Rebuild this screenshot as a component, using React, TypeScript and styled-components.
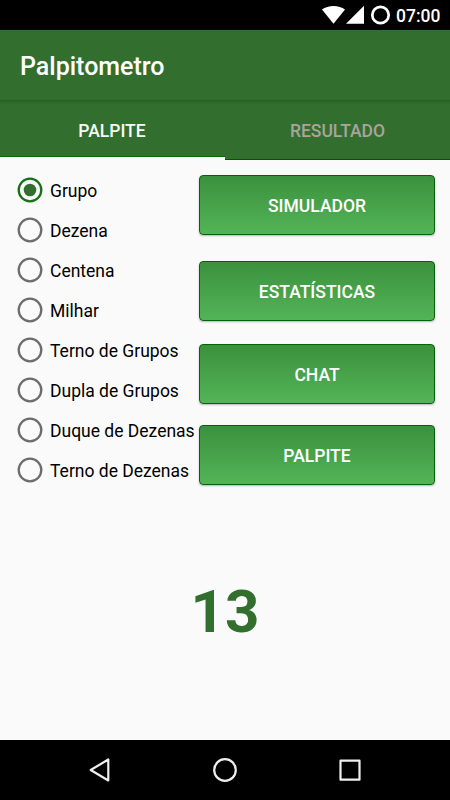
import React, { useState } from 'react';
import styled, { createGlobalStyle } from 'styled-components';

const GlobalStyle = createGlobalStyle`
  * { box-sizing: border-box; }
  body { margin: 0; background: #fafafa; font-family: Roboto, sans-serif; }
`;

const Screen = styled.div`
  display: flex;
  flex-direction: column;
  width: 450px;
  height: 800px;
  overflow: hidden;
  background: #fafafa;
`;

const StatusBar = styled.header`
  display: flex;
  justify-content: flex-end;
  flex: 0 0 30px;
  min-height: 0;
  background: #000;
  padding-right: 9px;
`;

const StatusIcons = styled.svg`
  width: 74px;
  height: 30px;
`;

const Clock = styled.span`
  width: 45px;
  height: 30px;
  color: #fff;
  font-size: 17.5px;
  font-weight: 500;
  line-height: 32px;
  white-space: nowrap;
`;

const Toolbar = styled.div`
  flex: 0 0 70px;
  min-height: 0;
  padding-left: 20px;
  background: #326f2f;
`;

const Title = styled.h1`
  height: 70px;
  margin: 0;
  color: #fff;
  font-size: 25px;
  font-weight: 500;
  line-height: 73px;
`;

const Tabs = styled.nav`
  display: grid;
  grid-template-columns: 1fr 1fr;
  flex: 0 0 60px;
  background: linear-gradient(#285c27 0, #2e672c 2px, #326f2f 5px);
`;

const Tab = styled.button<{ $active: boolean }>`
  border: 0;
  border-bottom: ${p => (p.$active ? '3px solid #fafafa' : '1px solid #075207')};
  padding: ${p => (p.$active ? '4px 1px 0 0' : '2px 0 0')};
  background: none;
  box-shadow: ${p => (p.$active ? 'inset 0 -1px #076a09' : 'none')};
  color: ${p => (p.$active ? '#fafafa' : '#aaa39e')};
  font: 500 17.5px Roboto, sans-serif;
`;

const Content = styled.main`
  display: grid;
  grid-template-columns: 199px 236px;
  flex: 0 0 340px;
`;

const RadioList = styled.div`
  padding: 10px 0 0 17px;
`;

const RadioRow = styled.div`
  display: flex;
  align-items: center;
  height: 40px;
  gap: 7px;
  color: #000;
  font-size: 17.5px;
  line-height: 40px;
  white-space: nowrap;
`;

const RadioMark = styled.svg`
  flex: 0 0 26px;
  height: 26px;
`;

const RadioLabel = styled.span`
  padding-top: 2px;
`;

const Actions = styled.div`
  display: flex;
  flex-direction: column;
  padding-top: 15px;
`;

const ActionButton = styled.button<{ $gap: number }>`
  flex: 0 0 60px;
  margin: 0 0 ${p => p.$gap}px;
  padding: 2px 0 0;
  border: 1px solid #07600a;
  border-radius: 4px;
  background: linear-gradient(#3b913d, #53b457);
  box-shadow: 0 1px 2px rgba(0, 0, 0, 0.28);
  color: #fff;
  font: 500 17.5px Roboto, sans-serif;
`;

const Result = styled.output`
  flex: 1;
  padding-top: 77px;
  text-align: center;
  color: #326f2f;
  font-size: 60px;
  font-weight: 700;
  line-height: 70px;
`;

const NavigationBar = styled.footer`
  display: flex;
  align-items: center;
  justify-content: center;
  gap: 97px;
  flex: 0 0 60px;
  background: #000;
`;

const NavIcon = styled.svg`
  width: 28px;
  height: 28px;
  fill: none;
  stroke: #eee;
  stroke-width: 2.2;
  stroke-linejoin: round;
`;

const options = ['Grupo', 'Dezena', 'Centena', 'Milhar', 'Terno de Grupos', 'Dupla de Grupos', 'Duque de Dezenas', 'Terno de Dezenas'];
const actions = [
  { label: 'SIMULADOR', gap: 26 },
  { label: 'ESTATÍSTICAS', gap: 23 },
  { label: 'CHAT', gap: 21 },
  { label: 'PALPITE', gap: 0 },
];

export default function App() {
  const [selected, setSelected] = useState('Grupo');
  return (
    <>
      <GlobalStyle />
      <Screen>
        <StatusBar>
          <StatusIcons viewBox="0 0 74 30">
            <path d="M0 9.5C6 4.8 17 4.8 23 9.5L11.5 23.8Z" fill="#fff" />
            <path d="M24 23.8L42 5.8V23.8Z" fill="#fff" />
            <circle cx="58.5" cy="15" r="8.2" fill="none" stroke="#fff" strokeWidth="2.7" />
          </StatusIcons>
          <Clock>07:00</Clock>
        </StatusBar>
        <Toolbar><Title>Palpitometro</Title></Toolbar>
        <Tabs>
          <Tab $active>PALPITE</Tab>
          <Tab $active={false}>RESULTADO</Tab>
        </Tabs>
        <Content>
          <RadioList role="radiogroup">
            {options.map(option => (
              <RadioRow key={option} role="radio" aria-checked={selected === option} onClick={() => setSelected(option)}>
                <RadioMark viewBox="0 0 26 26">
                  <circle cx="13" cy="13" r="11.3" fill="none" stroke={selected === option ? '#177017' : '#6c6c6c'} strokeWidth="2.3" />
                  {selected === option && <circle cx="13" cy="13" r="6.3" fill="#326f2f" />}
                </RadioMark>
                <RadioLabel>{option}</RadioLabel>
              </RadioRow>
            ))}
          </RadioList>
          <Actions>
            {actions.map(action => <ActionButton key={action.label} $gap={action.gap}>{action.label}</ActionButton>)}
          </Actions>
        </Content>
        <Result>13</Result>
        <NavigationBar>
          <NavIcon viewBox="0 0 28 28"><path d="M22.3 3.5V24.5L4.7 14Z" /></NavIcon>
          <NavIcon viewBox="0 0 28 28"><circle cx="14" cy="14" r="10.8" /></NavIcon>
          <NavIcon viewBox="0 0 28 28"><rect x="4.5" y="4.7" width="19" height="19" /></NavIcon>
        </NavigationBar>
      </Screen>
    </>
  );
}
